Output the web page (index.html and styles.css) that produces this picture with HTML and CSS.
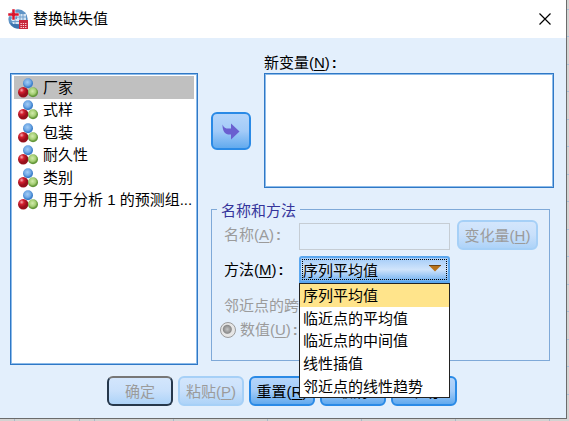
FILE: index.html
```html
<!DOCTYPE html>
<html lang="zh-CN">
<head>
  <meta charset="UTF-8" />
  <meta name="viewport" content="width=device-width, initial-scale=1" />
  <title>替换缺失值</title>
  <link rel="stylesheet" href="styles.css">
</head>
<body>

<!-- shared icon for nominal variables -->
<svg class="defs" aria-hidden="true">
  <defs>
    <radialGradient id="blue" cx="45%" cy="40%"><stop offset="0" stop-color="#a5cdf4"/><stop offset=".65" stop-color="#70a9e6"/><stop offset="1" stop-color="#3c7fcb"/></radialGradient>
    <radialGradient id="red" cx="35%" cy="30%"><stop offset="0" stop-color="#f8b0b4"/><stop offset=".45" stop-color="#d3202f"/><stop offset="1" stop-color="#97101c"/></radialGradient>
    <radialGradient id="green" cx="45%" cy="40%"><stop offset="0" stop-color="#d3ebad"/><stop offset=".65" stop-color="#a5cf74"/><stop offset="1" stop-color="#64973a"/></radialGradient>
    <symbol id="nominal" viewBox="0 0 20 20">
      <circle cx="10" cy="5.2" r="5" fill="url(#blue)"/>
      <circle cx="5.2" cy="14.2" r="5.2" fill="url(#red)"/>
      <circle cx="15" cy="14.2" r="5" fill="url(#green)"/>
    </symbol>
  </defs>
</svg>

<div class="dialog" role="dialog" aria-labelledby="dialogTitle">
  <header class="titlebar">
    <svg class="logo" viewBox="0 0 20 20" aria-hidden="true">
      <circle cx="10" cy="10" r="9.7" fill="#5f94c6"/>
      <path d="M2 14a9.700 9.700 0 0 0 9 5.600v-4z" fill="#3d74ad"/>
      <path d="M9 5h9v6H9zM3 10h8v5H5z" fill="#d5e4f3"/>
      <path d="M9 8h9M12 5v6M15 5v6M4 12.500h7M7 10v5" stroke="#6f9dcb" fill="none"/>
      <path d="M4 0h3v4h4v3H7v4H4V7H0V4h4z" fill="#d8152d" stroke="#fff" stroke-width=".5"/>
      <path d="M11 11h9v9h-9z" fill="#c9283c"/>
      <path d="M12.500 14.500h6.500M12.500 16.500h6.500M12.500 18.500h6.500" stroke="#ffd9dc" stroke-dasharray="1.300 1" fill="none"/>
    </svg>
    <h1 id="dialogTitle">替换缺失值</h1>
    <button class="close" aria-label="关闭">
      <svg viewBox="0 0 12 12" aria-hidden="true"><path d="M.5.5l11 11M11.500.5l-11 11" stroke="#000" stroke-width="1.200"/></svg>
    </button>
  </header>

  <main class="content">
    <ul class="box source" role="listbox" aria-label="变量">
      <li class="selected" role="option" aria-selected="true"><svg><use href="#nominal"/></svg>厂家</li>
      <li role="option"><svg><use href="#nominal"/></svg>式样</li>
      <li role="option"><svg><use href="#nominal"/></svg>包装</li>
      <li role="option"><svg><use href="#nominal"/></svg>耐久性</li>
      <li role="option"><svg><use href="#nominal"/></svg>类别</li>
      <li role="option"><svg><use href="#nominal"/></svg>用于分析 1 的预测组...</li>
    </ul>

    <section class="side">
      <div class="target">
        <button class="btn move" aria-label="移动">
          <svg viewBox="0 0 18 17" aria-hidden="true"><path d="M.5 1.500C2 5 4 6 9 5.500V.5l8.500 8L9 16.500v-5C3.500 12 .5 9 .5 1.500z" fill="#6a5fd0"/></svg>
        </button>
        <div class="new-vars">
          <span id="newLabel" class="label">新变量(<u>N</u>)<b>:</b></span>
          <div class="box" role="listbox" aria-labelledby="newLabel"></div>
        </div>
      </div>

      <fieldset>
        <legend>名称和方法</legend>
        <div class="row">
          <label class="off" for="name">名称(<u>A</u>)<b>:</b></label>
          <input type="text" id="name" disabled>
          <button class="btn" disabled>变化量(<u>H</u>)</button>
        </div>
        <div class="row">
          <label for="method">方法(<u>M</u>)<b>:</b></label>
          <div class="combo">
            <select id="method">
              <option>序列平均值</option>
              <option>临近点的平均值</option>
              <option>临近点的中间值</option>
              <option>线性插值</option>
              <option>邻近点的线性趋势</option>
            </select>
            <svg class="arrow" viewBox="0 0 12 7" aria-hidden="true"><path d="M0 .5h12L6 6.500z" fill="#b8721a"/><path d="M0 .5h12" stroke="#6e4412"/></svg>
            <ul class="menu" role="listbox" aria-label="方法">
              <li class="current" role="option" aria-selected="true">序列平均值</li>
              <li role="option">临近点的平均值</li>
              <li role="option">临近点的中间值</li>
              <li role="option">线性插值</li>
              <li role="option">邻近点的线性趋势</li>
            </ul>
          </div>
        </div>
        <p class="off span">邻近点的跨度<b>:</b></p>
        <label class="off radio"><input type="radio" name="span" checked disabled>数值(<u>U</u>)<b>:</b></label>
      </fieldset>
    </section>
  </main>

  <footer class="actions">
    <button class="btn default" disabled>确定</button>
    <button class="btn" disabled>粘贴(<u>P</u>)</button>
    <button class="btn">重置(<u>R</u>)</button>
    <button class="btn">取消</button>
    <button class="btn">帮助</button>
  </footer>
</div>

</body>
</html>
```
FILE: styles.css
```css
* {
  box-sizing: border-box;
}
body {
  margin: 0;
  min-height: 100vh;
  padding-right: 2px;
  /* spreadsheet grid behind the dialog */
  background:
    linear-gradient(#a9b9c9, #a9b9c9) 14px 0 / 1px 100% no-repeat,
    linear-gradient(#a9b9c9, #a9b9c9) 94px 0 / 1px 100% no-repeat,
    linear-gradient(90deg, #a9b9c9 1px, transparent 1px) 173px 0 / 94px 100%,
    linear-gradient(#a9c0d8 1px, transparent 1px, transparent 27px, #a9c0d8 27px, #a9c0d8 28px, transparent 28px) 0 9px / 100% 55px,
    #d4d3d2;
  color: #000;
  font: 15px/20px "Liberation Sans", "Noto Sans CJK SC", sans-serif;
}
button, input, select {
  font: inherit;
  color: inherit;
}
ul {
  list-style: none;
  margin: 0;
  padding: 0;
}
u {
  text-underline-offset: 2px;
}
label b, .label b, .span b {
  margin-left: 2px;
}
.defs {
  position: absolute;
  width: 0;
  height: 0;
}

.dialog {
  background: #e3effc;
  border-right: 1px solid #6b6b6b;
  border-bottom: 1px solid #6b6b6b;
}
.titlebar {
  display: flex;
  align-items: center;
  gap: 5px;
  height: 38px;
  padding: 0 15px 0 8px;
  background: #fff;
}
.titlebar h1 {
  flex: 1;
  margin: 0;
  font-size: 15px;
  font-weight: normal;
}
.logo {
  width: 20px;
  height: 20px;
}
.close {
  display: flex;
  padding: 0;
  border: none;
  background: none;
}
.close svg {
  width: 12px;
  height: 12px;
}

.content {
  display: grid;
  grid-template-columns: 188px 1fr;
  gap: 13px;
  padding: 15px 12px 0 10px;
}
.box {
  background: #fff;
  border: 1px solid #2f78c6;
  box-shadow: inset 0 0 0 1px #8dbbe9;
}
.source {
  margin-top: 20px;
  height: 292px;
  padding: 2px 3px 153px;
  display: grid;
  grid-template-rows: repeat(6, 1fr);
}
.source li {
  display: flex;
  align-items: center;
  gap: 5px;
  padding: 1px 0 0 4px;
  white-space: nowrap;
}
.source .selected {
  background: #c0c0c0;
}
.source svg {
  width: 20px;
  height: 20px;
  flex: none;
}

.target {
  display: flex;
  align-items: flex-end;
  gap: 13px;
}
.new-vars {
  flex: 1;
}
.new-vars .label {
  display: block;
}
.new-vars .box {
  height: 115px;
}

.btn {
  height: 30px;
  padding: 2px 4px 0;
  border: 2px solid #2a8ae6;
  border-radius: 6px;
  background: linear-gradient(#b5d5fa, #a3cbf8 50%, #62aaee);
  white-space: nowrap;
}
.btn:disabled {
  color: #9b9b9b;
  border-color: #a6d0f7;
  background: linear-gradient(#d3e6fc, #c9e0fb 50%, #add3f8);
}
.btn.default {
  border: 2px solid #26384c;
  border-top-color: #777;
}
.move {
  width: 40px;
  height: 38px;
  margin-bottom: 38px;
  padding: 0;
}
.move svg {
  display: block;
  margin: auto;
  width: 18px;
  height: 17px;
}

fieldset {
  margin: 11px 4px 0 0;
  height: 162px;
  padding: 0 11px 0 12px;
  border: 1px solid #7fa9d8;
  min-width: 0;
}
legend {
  margin-left: -7px;
  padding: 4px 4px 0;
  line-height: 16px;
  color: #35359b;
}
.row {
  display: grid;
  grid-template-columns: 75px 1fr 88px;
  align-items: center;
}
.row input {
  min-width: 0;
  height: 27px;
  margin-top: 4px;
  border: 1px solid #c6cdd4;
  background: transparent;
}
.row .btn {
  margin-left: 7px;
}
.row + .row {
  margin-top: 6px;
}
.off {
  color: #9b9b9b;
}
.combo {
  position: relative;
}
.combo select {
  display: block;
  width: 100%;
  height: 27px;
  appearance: none;
  padding: 2px 2px 0;
  border: 2px solid #5ba7ef;
  border-radius: 3px 3px 0 0;
  background: linear-gradient(#a4ccf8, #d0e4fb 50%, #72b1f0);
  outline: 1px dotted #000;
  outline-offset: -4px;
}
.arrow {
  position: absolute;
  top: 9px;
  right: 9px;
  width: 12px;
  height: 7px;
}
.menu {
  position: absolute;
  top: 100%;
  left: 0;
  z-index: 1;
  display: grid;
  grid-auto-rows: 1fr;
  width: 100%;
  height: 115px;
  background: #fff;
  border: 1px solid #222;
}
.menu li {
  display: flex;
  align-items: center;
  padding: 2px 0 0 3px;
  white-space: nowrap;
}
.menu .current {
  background: #ffe48b;
}
.span {
  margin: 13px 0 4px;
}
.radio {
  display: flex;
  align-items: center;
  margin-left: -4px;
}
.radio input {
  appearance: none;
  width: 16px;
  height: 16px;
  margin: 0 4px 0 0;
  border: 1px solid #9b9b9b;
  border-radius: 50%;
  background: radial-gradient(circle at 45% 45%, #c4c4c4 0, #8b8b8b 4px, #e6e6e6 5px);
}

.actions {
  display: flex;
  justify-content: center;
  gap: 5px;
  padding: 11px 2px 12px 0;
}
.actions .btn {
  width: 66px;
}
```
